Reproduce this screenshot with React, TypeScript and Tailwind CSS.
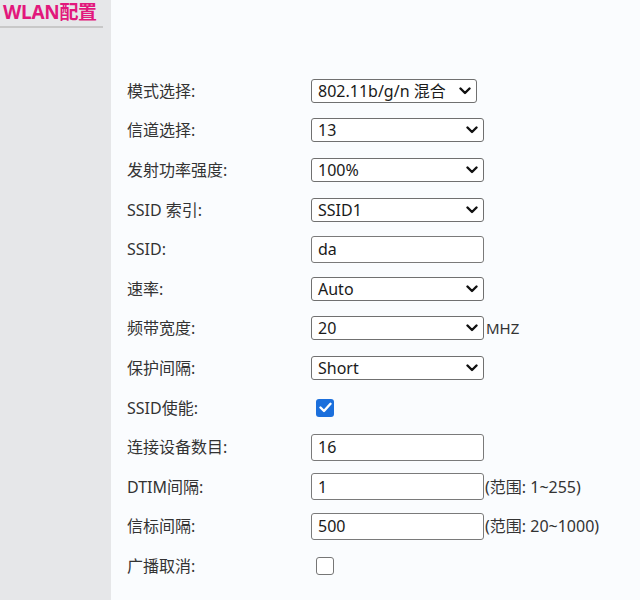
import React from 'react'

type Row =
  | { label: string; kind: 'select'; value: string; narrow?: boolean; suffix?: string }
  | { label: string; kind: 'input'; value: string; suffix?: string }
  | { label: string; kind: 'check'; checked: boolean }

const rows: Row[] = [
  { label: '模式选择:', kind: 'select', value: '802.11b/g/n 混合', narrow: true },
  { label: '信道选择:', kind: 'select', value: '13' },
  { label: '发射功率强度:', kind: 'select', value: '100%' },
  { label: 'SSID 索引:', kind: 'select', value: 'SSID1' },
  { label: 'SSID:', kind: 'input', value: 'da' },
  { label: '速率:', kind: 'select', value: 'Auto' },
  { label: '频带宽度:', kind: 'select', value: '20', suffix: 'MHZ' },
  { label: '保护间隔:', kind: 'select', value: 'Short' },
  { label: 'SSID使能:', kind: 'check', checked: true },
  { label: '连接设备数目:', kind: 'input', value: '16' },
  { label: 'DTIM间隔:', kind: 'input', value: '1', suffix: '(范围: 1~255)' },
  { label: '信标间隔:', kind: 'input', value: '500', suffix: '(范围: 20~1000)' },
  { label: '广播取消:', kind: 'check', checked: false },
]

const Chevron = () => (
  <svg width="12" height="8" viewBox="0 0 12 8" className="shrink-0">
    <path d="M1.5 1.5 L6 6 L10.5 1.5" fill="none" stroke="#111" strokeWidth="2.4" strokeLinecap="round" strokeLinejoin="round" />
  </svg>
)

const Field: React.FC<{ row: Row }> = ({ row }) => {
  if (row.kind === 'select') {
    return (
      <div className="flex items-center">
        <div
          className={`flex h-[24px] items-center justify-between rounded-[3px] border border-[#707070] bg-white pl-[6px] pr-[5px] text-[16px] text-[#1a1a1a] ${
            row.narrow ? 'w-[166px]' : 'w-[173px]'
          }`}
        >
          <span>{row.value}</span>
          <Chevron />
        </div>
        {row.suffix && <span className="ml-[2px] text-[15px] text-[#333]">{row.suffix}</span>}
      </div>
    )
  }
  if (row.kind === 'input') {
    return (
      <div className="flex items-center">
        <div className="flex h-[27px] w-[173px] items-center rounded-[3px] border border-[#7a7a7a] bg-white px-[6px] text-[16px] text-[#1a1a1a]">
          {row.value}
        </div>
        {row.suffix && <span className="ml-[1px] text-[16px] text-[#333]">{row.suffix}</span>}
      </div>
    )
  }
  return row.checked ? (
    <div className="ml-[5px] flex h-[18px] w-[18px] items-center justify-center rounded-[3px] bg-[#1b6fdc]">
      <svg width="13" height="11" viewBox="0 0 13 11">
        <path d="M1.5 5.5 L5 9 L11.5 1.8" fill="none" stroke="white" strokeWidth="2.4" strokeLinecap="round" strokeLinejoin="round" />
      </svg>
    </div>
  ) : (
    <div className="ml-[5px] h-[18px] w-[18px] rounded-[3px] border border-[#767676] bg-white" />
  )
}

export default function App() {
  return (
    <div
      className="flex h-[600px] w-[640px]"
      style={{ fontFamily: '"Noto Sans", "Noto Sans CJK SC", sans-serif' }}
    >
      <div className="w-[111px] shrink-0 bg-[#e6e7e9]">
        <div className="w-[103px] whitespace-nowrap border-b-2 border-[#c8c8c8] pb-[2px] pl-[3px] pt-[1px] text-[19px] font-bold leading-[23px] tracking-[-0.3px] text-[#e2187c]">
          WLAN配置
        </div>
      </div>
      <div className="flex-1 bg-[#fafcfe] pl-[16px] pt-[71px]">
        {rows.map((row) => (
          <div key={row.label} className="flex h-[39.6px] items-center">
            <div className="w-[184px] shrink-0 text-[16px] text-[#333]">{row.label}</div>
            <Field row={row} />
          </div>
        ))}
      </div>
    </div>
  )
}
